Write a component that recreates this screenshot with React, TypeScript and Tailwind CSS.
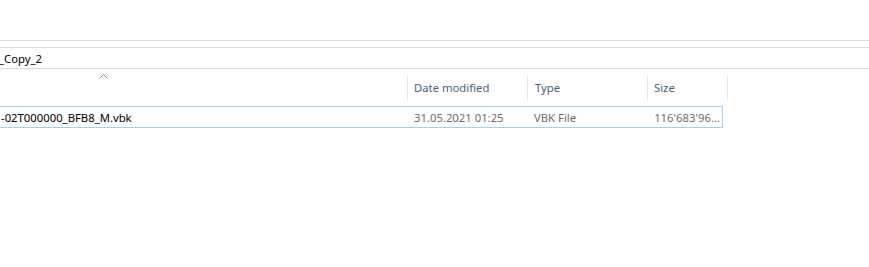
import React from "react";

export default function App() {
  const font = { fontFamily: '"Noto Sans", "Open Sans", sans-serif' };
  return (
    <div className="w-[869px] h-[267px] bg-white relative overflow-hidden text-[11.3px]" style={font}>
      <div className="h-[40px]" />
      <div className="h-px bg-[#dadada]" />
      <div className="h-[6px]" />
      <div className="h-px bg-[#dadada]" />
      <div className="h-[20px] flex items-center text-black leading-none pt-[1px]">
        <span className="-ml-[1px]">_Copy_2</span>
      </div>
      <div className="h-px bg-[#dadada]" />
      {/* header */}
      <div className="flex h-[31px] relative">
        <div className="w-[407px] relative">
          <svg className="absolute left-[99px] top-[5px]" width="9" height="5" viewBox="0 0 9 5">
            <path d="M0.5 4.5 L4.5 0.5 L8.5 4.5" fill="none" stroke="#8a8a8a" strokeWidth="1" />
          </svg>
        </div>
        <div className="w-[120px] border-l border-[#e5e5e5] h-[24px] mt-[7px] flex items-center pl-[6px] pt-[1px] text-[#4c607a]">Date modified</div>
        <div className="w-[120px] border-l border-[#e5e5e5] h-[24px] mt-[7px] flex items-center pl-[7px] pt-[1px] text-[#4c607a]">Type</div>
        <div className="w-[80px] border-l border-[#e5e5e5] h-[24px] mt-[7px] flex items-center pl-[6px] pt-[1px] text-[#4c607a]">Size</div>
        <div className="border-l border-[#e5e5e5] h-[24px] mt-[7px]" />
      </div>
      <div className="h-[6px]" />
      {/* row */}
      <div className="flex h-[22px] w-[724px] -ml-px border border-[#99d1ff] items-center pt-[2px]">
        <div className="w-[408px] pl-[1px] text-black whitespace-nowrap">-02T000000_BFB8_M.vbk</div>
        <div className="w-[120px] pl-[6px] text-[#6d6d6d]">31.05.2021 01:25</div>
        <div className="w-[120px] pl-[6px] text-[#6d6d6d]">VBK File</div>
        <div className="flex-1 text-right pr-[2px] text-[#6d6d6d]">116'683'96...</div>
      </div>
    </div>
  );
}
